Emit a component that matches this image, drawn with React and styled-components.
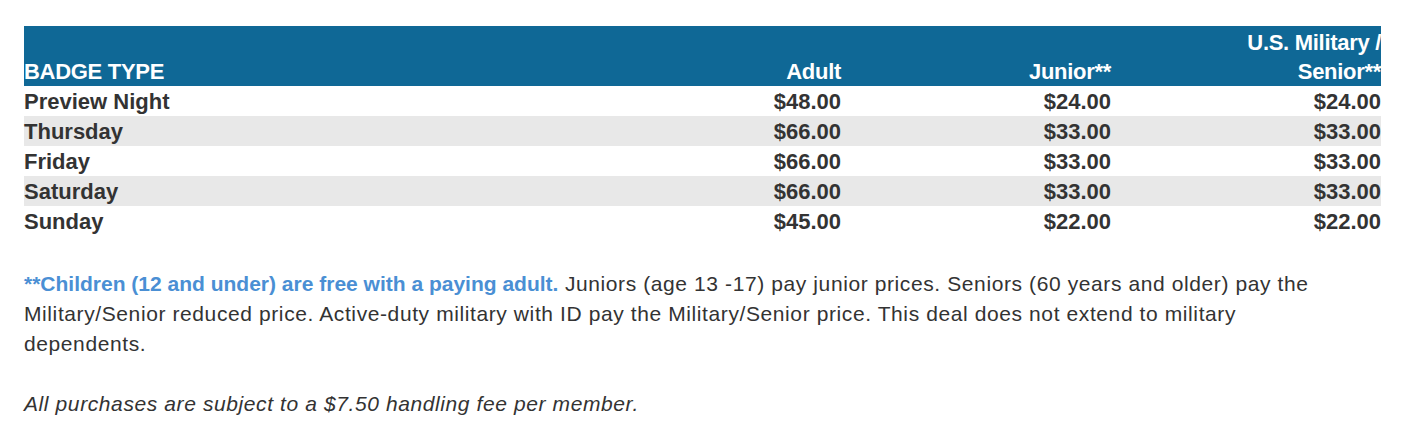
import React from "react";
import styled, { createGlobalStyle } from "styled-components";

const GlobalStyle = createGlobalStyle`
  body {
    margin: 0;
    background: #fff;
    font-family: "Liberation Sans", Arial, Helvetica, sans-serif;
    color: #333;
  }
`;

const Page = styled.div`
  padding: 26px 23px 0 24px;
`;

const PriceTable = styled.table`
  width: 100%;
  border-collapse: collapse;
  border-spacing: 0;
  font-size: 22px;
  font-weight: bold;
  line-height: 30px;
`;

const HeadRow = styled.tr`
  background: #0f6896;
  color: #fff;
`;

const HeadCell = styled.th`
  padding: 2px 0 0;
  height: 58px;
  vertical-align: bottom;
  text-align: ${props => (props.$first ? "left" : "right")};
  width: ${props => (props.$first ? "auto" : "270px")};
  font-weight: bold;
  letter-spacing: -0.3px;
  line-height: 29px;
`;

const Row = styled.tr`
  background: ${props => (props.$striped ? "#e8e8e8" : "#fff")};
`;

const Cell = styled.td`
  padding: 1px 0 0;
  height: 29px;
  line-height: 29px;
  text-align: ${props => (props.$first ? "left" : "right")};
  color: #333;
`;

const Note = styled.p`
  max-width: 1322px;
  margin: 33px 0 0;
  font-size: 21px;
  letter-spacing: 0.6px;
  line-height: 30px;
  color: #333;
`;

const Highlight = styled.strong`
  color: #4a8fd4;
  font-weight: bold;
  letter-spacing: 0;
`;

const Fine = styled.p`
  margin: 30px 0 0;
  font-size: 21px;
  letter-spacing: 0.6px;
  line-height: 30px;
  font-style: italic;
  color: #333;
`;

const rows = [
  ["Preview Night", "$48.00", "$24.00", "$24.00"],
  ["Thursday", "$66.00", "$33.00", "$33.00"],
  ["Friday", "$66.00", "$33.00", "$33.00"],
  ["Saturday", "$66.00", "$33.00", "$33.00"],
  ["Sunday", "$45.00", "$22.00", "$22.00"]
];

const App = () => {
  return (
    <Page>
      <GlobalStyle />
      <PriceTable>
        <thead>
          <HeadRow>
            <HeadCell $first>BADGE TYPE</HeadCell>
            <HeadCell>Adult</HeadCell>
            <HeadCell>Junior**</HeadCell>
            <HeadCell>
              U.S. Military /<br />
              Senior**
            </HeadCell>
          </HeadRow>
        </thead>
        <tbody>
          {rows.map((row, index) => (
            <Row key={row[0]} $striped={index % 2 === 1}>
              {row.map((value, i) => (
                <Cell key={i} $first={i === 0}>
                  {value}
                </Cell>
              ))}
            </Row>
          ))}
        </tbody>
      </PriceTable>
      <Note>
        <Highlight>**Children (12 and under) are free with a paying adult.</Highlight>{" "}
        Juniors (age 13 -17) pay junior prices. Seniors (60 years and older) pay
        the Military/Senior reduced price. Active-duty military with ID pay the
        Military/Senior price. This deal does not extend to military dependents.
      </Note>
      <Fine>All purchases are subject to a $7.50 handling fee per member.</Fine>
    </Page>
  );
};

export default App;
